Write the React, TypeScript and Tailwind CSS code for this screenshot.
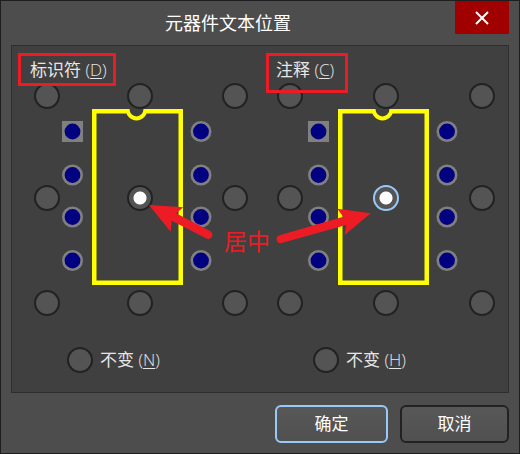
const radioClass =
  "m-0 size-[26px] shrink-0 appearance-none rounded-full border-2 bg-[#545454] bg-clip-padding outline-none checked:bg-[radial-gradient(circle,#ffffff_6px,#545454_7px)]";

const positions = [
  "左上", "中上", "右上",
  "左中", "居中", "右中",
  "左下", "中下", "右下",
];

const pinRows = [22.5, 66, 108, 151.5];

function Footprint() {
  return (
    <svg
      className="pointer-events-none absolute left-[50px] top-[26px]"
      width="150"
      height="176"
      viewBox="0 0 150 176"
      aria-hidden="true"
    >
      <path
        d="M66 2.25H32.25V173.750H118.750V2.25H83"
        fill="none"
        stroke="#ffff00"
        strokeWidth="4.5"
      />
      <path d="M65.500 0A9 9.500 0 0 0 83.500 0" fill="none" stroke="#ffff00" strokeWidth="4" />
      {pinRows.map((y, i) => (
        <g key={y}>
          {i === 0 ? (
            <rect x="0" y="12" width="21" height="21" fill="#808080" />
          ) : (
            <circle cx="10.5" cy={y} r="10.5" fill="#808080" />
          )}
          <circle cx="10.5" cy={y} r="7.900" fill="#000080" />
          <circle cx="139" cy={y} r="10.5" fill="#808080" />
          <circle cx="139" cy={y} r="7.900" fill="#000080" />
        </g>
      ))}
    </svg>
  );
}

interface PositionGroupProps {
  name: string;
  title: string;
  mnemonic: string;
  unchangedKey: string;
  columns: string;
  focused?: boolean;
}

function PositionGroup({ name, title, mnemonic, unchangedKey, columns, focused }: PositionGroupProps) {
  return (
    <div role="radiogroup" aria-labelledby={`${name}-title`} className="min-w-0 flex-1">
      <div id={`${name}-title`} className="h-[25px] pl-[18px] leading-6">
        {title} <span className="font-light">(<u className="underline-offset-2">{mnemonic}</u>)</span>
      </div>
      <div className="relative">
        <Footprint />
        <div className={`relative grid grid-rows-[102px_105px_26px] items-start ${columns}`}>
          {positions.map((label, i) => (
            <input
              key={label}
              type="radio"
              name={name}
              value={i}
              aria-label={label}
              defaultChecked={i === 4}
              className={`${radioClass} ${focused && i === 4 ? "border-[#99c9f9]" : "border-[#222222]"}`}
            />
          ))}
        </div>
      </div>
      <label className="ml-[55px] mt-[31px] flex w-fit items-center gap-[7px] leading-6">
        <input
          type="radio"
          name={name}
          value="unchanged"
          accessKey={unchangedKey}
          className={`${radioClass} border-[#222222]`}
        />
        <span>
          不变 <span className="font-light">(<u className="underline-offset-2">{unchangedKey}</u>)</span>
        </span>
      </label>
    </div>
  );
}

function Annotations() {
  return (
    <div className="pointer-events-none absolute left-0 top-0">
      <svg width="496" height="346" viewBox="12 46 496 346" aria-hidden="true">
        <g fill="none" stroke="#ed1c24" strokeWidth="3">
          <rect x="19.5" y="54.5" width="95" height="30" />
          <rect x="267.5" y="54.5" width="79" height="37" />
        </g>
        <g fill="#ed1c24">
          <path d="M149 205L183.300 207.300L176 213.300L210 231A4 4 0 0 1 206.500 238.500L171.700 220.700L170.700 231.700Z" />
          <path d="M370.700 213.300L337.300 208.700L343.300 216.700L279.700 235.200A4 4 0 0 0 281.700 243L346 225L344.700 235Z" />
        </g>
      </svg>
      <span className="absolute left-[212px] top-[180px] whitespace-nowrap text-[23px] leading-[30px] text-[#ed1c24]">
        居中
      </span>
    </div>
  );
}

export default function App() {
  return (
    <main className="border border-[#1e1e1e] bg-[#4d4d4d] font-['Open_Sans','Noto_Sans_CJK_SC',sans-serif] text-[17px] text-[#e6e6e6]">
      <header className="flex h-11 items-start pr-2.5">
        <h1 className="flex-1 pt-2 text-center text-[18px] leading-7 font-normal text-white">元器件文本位置</h1>
        <button type="button" aria-label="关闭" className="flex h-[33px] w-[54px] items-center justify-center bg-[#a00000]">
          <svg width="14" height="14" viewBox="0 0 14 14" fill="none" stroke="#ffffff" strokeWidth="2" aria-hidden="true">
            <path d="M1 1L13 13M13 1L1 13" />
          </svg>
        </button>
      </header>
      <section className="relative mx-2.5 flex border border-[#2e2e2e] bg-[#404040] pb-[19px] pr-1 pt-3">
        <PositionGroup
          name="designator"
          title="标识符"
          mnemonic="D"
          unchangedKey="N"
          columns="grid-cols-[93px_95px_26px] pl-[22px]"
        />
        <PositionGroup
          name="comment"
          title="注释"
          mnemonic="C"
          unchangedKey="H"
          columns="grid-cols-[96px_96px_26px] pl-[19px]"
          focused
        />
        <Annotations />
      </section>
      <footer className="flex justify-end gap-3 px-2.5 pb-2.5 pt-3 text-white">
        <button type="button" className="h-[38px] w-[113px] rounded-md border-2 border-[#99c9f9] bg-linear-to-b from-[#585858] to-[#505050]">
          确定
        </button>
        <button type="button" className="h-[38px] w-[109px] rounded-md border-2 border-[#222222] bg-linear-to-b from-[#585858] to-[#505050]">
          取消
        </button>
      </footer>
    </main>
  );
}
